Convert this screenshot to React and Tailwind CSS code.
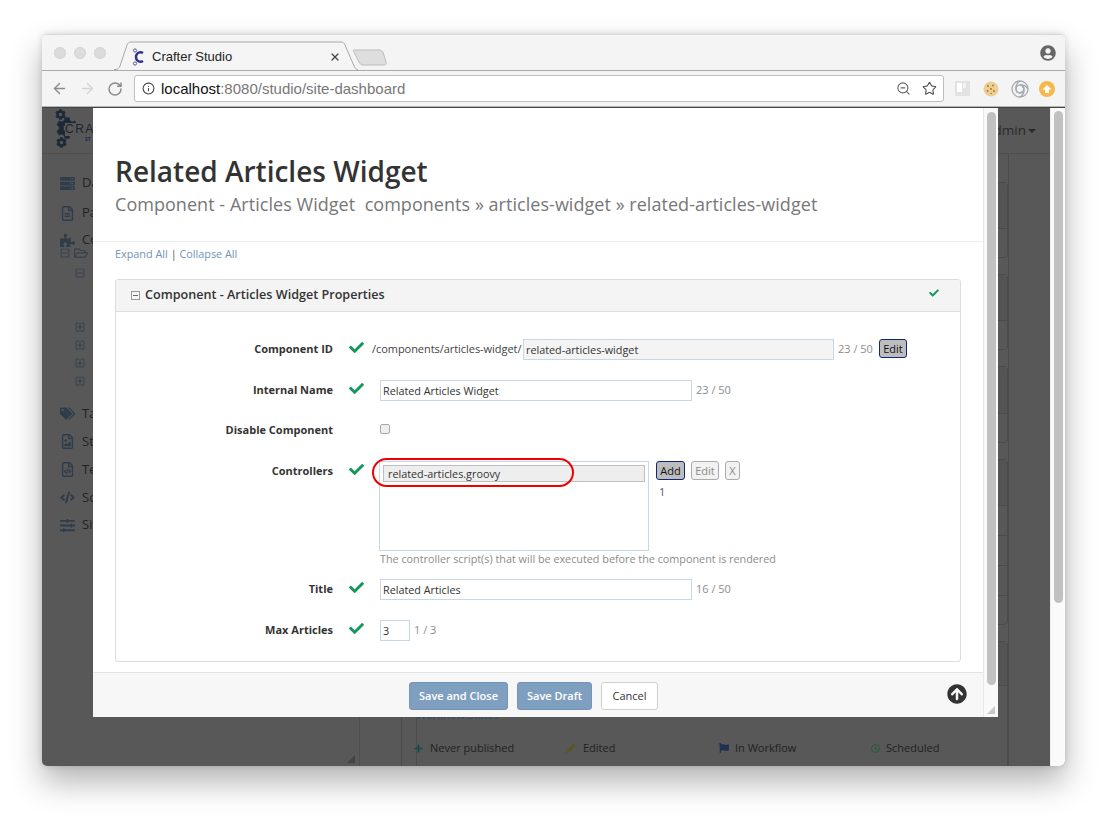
import {
  FaCheck, FaCog, FaServer, FaRegFileAlt, FaPuzzlePiece, FaTags, FaRegFileImage, FaRegFileCode, FaCode,
  FaSlidersH, FaRegMinusSquare, FaRegPlusSquare, FaRegFolderOpen, FaArrowCircleUp, FaPlus, FaPencilAlt, FaFlag, FaRegClock, FaUserCircle,
} from "react-icons/fa";
import { ArrowLeft, ArrowRight, RotateCw, Info, ZoomOut, Star, X } from "lucide-react";

function Favicon() {
  return (
    <svg width="14" height="18" viewBox="0 0 14 18" fill="none">
      <path d="M11 5 C8 3 4 5 4 9 C4 13 8 15 11 13" stroke="#33308a" strokeWidth="2.4" />
      <circle cx="3" cy="2.5" r="1.6" stroke="#5a5aa0" strokeWidth="1" />
      <circle cx="3" cy="15.5" r="1.6" stroke="#5a5aa0" strokeWidth="1" />
    </svg>
  );
}

function ChromeTabs() {
  return (
    <div className="relative h-[36px] bg-[#f4f4f4] border-b border-[#aaaaaa] rounded-t-[5px] flex items-center pl-[12px]">
      <span className="w-3 h-3 rounded-full bg-[#dcdcdc] border border-[#d2d2d2]" />
      <span className="w-3 h-3 rounded-full bg-[#dcdcdc] border border-[#d2d2d2] ml-2" />
      <span className="w-3 h-3 rounded-full bg-[#dcdcdc] border border-[#d2d2d2] ml-2" />
      <svg className="absolute left-[72px] top-[6px]" width="280" height="30" viewBox="0 0 280 30" fill="none">
        <path d="M0 28.5 H2 C4 28.5 5 27 6 25 L13 4 C14 2 15 1 17 1 H227 C229 1 230 2 231 4 L240 25 C241 27 242 28.5 244 28.5" fill="#f5f5f5" stroke="#a8a8a8" />
        <path d="M240 9 H265 C267 9 268 10 269 11 L272 21 C273 24 271 24 269 24 H249 C247 24 246 23 245 21 L240 11 C239 10 239 9 240 9 Z" fill="#dedede" stroke="#bcbcbc" />
      </svg>
      <div className="absolute left-[90px] top-[13px]"><Favicon /></div>
      <span className="absolute left-[110px] top-[14px] text-[13px] leading-[16px] text-[#222] font-['Liberation_Sans',sans-serif]">Crafter Studio</span>
      <X className="absolute left-[287px] top-[16px] text-[#444]" size={12} strokeWidth={2.5} />
      <FaUserCircle className="absolute right-[9px] top-[10px] text-[#666]" size={16} />
    </div>
  );
}

function ChromeToolbar() {
  return (
    <div className="h-[36px] bg-[#f4f4f4] border-b border-[#b5b5b5] flex items-center">
      <ArrowLeft className="ml-[9px] text-[#8a8a8a]" size={17} strokeWidth={2} />
      <ArrowRight className="ml-[11px] text-[#d4d4d4]" size={17} strokeWidth={2} />
      <RotateCw className="ml-[11px] text-[#8a8a8a]" size={16} strokeWidth={2.2} />
      <div className="ml-[11px] w-[810px] h-[27px] bg-white border border-[#bdbdbd] rounded-[3px] flex items-center pl-[7px] pr-[6px] font-['Liberation_Sans',sans-serif] text-[15px]">
        <Info className="text-[#444]" size={13} strokeWidth={2} />
        <span className="ml-[6px] pt-px text-[#111]">localhost</span>
        <span className="pt-px text-[#777]">:8080/studio/site-dashboard</span>
        <ZoomOut className="ml-auto text-[#666]" size={15} strokeWidth={1.8} />
        <Star className="ml-[11px] text-[#555]" size={15} strokeWidth={1.8} />
      </div>
      <div className="ml-[11px] w-[15px] h-[15px] rounded-[1px] bg-[#e2e2e2] flex p-[2px] gap-[1px]">
        <span className="w-[5px] h-[9px] bg-white" />
        <span className="w-[3px] h-[5px] bg-[#f3f3f3]" />
      </div>
      <svg className="ml-[13px]" width="16" height="16" viewBox="0 0 16 16">
        <circle cx="8" cy="8" r="7.5" fill="#eccf95" />
        <circle cx="5" cy="5" r="1" fill="#a9763c" />
        <circle cx="10" cy="4.5" r="0.9" fill="#a9763c" />
        <circle cx="8" cy="8" r="1" fill="#a9763c" />
        <circle cx="4.5" cy="10" r="0.9" fill="#a9763c" />
        <circle cx="11" cy="10" r="1" fill="#a9763c" />
        <circle cx="8" cy="12.5" r="0.8" fill="#a9763c" />
      </svg>
      <svg className="ml-[12px]" width="18" height="18" viewBox="0 0 18 18" fill="none" stroke="#a3aab0" strokeWidth="1.3">
        <circle cx="9" cy="9" r="8" />
        <path d="M9 1 C3 5 4 13 9 13 C13 13 14 8 11 6.5" />
        <path d="M17 9 C13 3 5 4 5 9 C5 13 10 14 11.5 11" />
        <path d="M9 17 C15 13 14 5 9 5" />
      </svg>
      <span className="ml-[10px] w-4 h-4 rounded-full bg-[#f5b94e] flex items-center justify-center">
        <svg width="10" height="10" viewBox="0 0 10 10"><path d="M5 1 L9.5 5.5 H7 V9 H3 V5.5 H0.5 Z" fill="white" /></svg>
      </span>
    </div>
  );
}

const navTop = [
  { icon: FaServer, label: "Dashboard", h: "h-[30px]" },
  { icon: FaRegFileAlt, label: "Pages", h: "h-[30px]" },
  { icon: FaPuzzlePiece, label: "Components", h: "h-[24px]" },
];
const navBottom = [
  { icon: FaTags, label: "Taxonomy" },
  { icon: FaRegFileImage, label: "Static Assets" },
  { icon: FaRegFileCode, label: "Templates" },
  { icon: FaCode, label: "Scripts" },
  { icon: FaSlidersH, label: "Site Config" },
];

function NavItem({ item }) {
  const Icon = item.icon;
  // the modal covers everything right of 51px, so the label is cut there
  return (
    <div className={"w-[51px] overflow-hidden flex items-center pl-[18px] " + (item.h || "h-[27.8px]")}>
      <Icon className="text-[#2f3d4b] shrink-0" size={15} />
      <span className="ml-[7px] text-[13px] text-[#222] whitespace-nowrap">{item.label}</span>
    </div>
  );
}

function Sidebar() {
  return (
    <div className="w-[318px] border-r border-[#4f4f4f] pt-[14px] relative">
      {navTop.map((item) => <NavItem key={item.label} item={item} />)}
      <div className="-mt-[6px] pl-[18px] h-[14px] flex items-center gap-[4px] text-[#34404c]">
        <FaRegMinusSquare size={10} /><FaRegFolderOpen size={14} />
      </div>
      <div className="pl-[33px] h-[58px] pt-[8px] text-[#34404c]"><FaRegMinusSquare size={10} /></div>
      {[0, 1, 2, 3].map((i) => (
        <div key={i} className="pl-[33px] h-[18px] flex items-center text-[#34404c]"><FaRegPlusSquare size={10} /></div>
      ))}
      <div className="pt-[10px]">
        {navBottom.map((item) => <NavItem key={item.label} item={item} />)}
      </div>
      <svg className="absolute right-[4px] bottom-[3px]" width="8" height="8" viewBox="0 0 8 8"><path d="M8 0 V8 H0 Z" fill="#444" /></svg>
    </div>
  );
}

function BackBox({ rows }) {
  return (
    <div className="ml-[14px] mb-[16px] rounded-r-[4px] border border-[#4b4b4b]">
      {rows.map((h, i) => (
        <div key={i} style={{ height: h }} className={i > 0 ? "border-t border-[#4b4b4b]" : "bg-[#545454]"} />
      ))}
    </div>
  );
}

function Backdrop() {
  return (
    <div className="h-[658px] bg-[#585858] flex flex-col overflow-hidden font-['Open_Sans',sans-serif]">
      <div className="h-[46px] shrink-0 border-b border-[#4f4f4f] relative flex items-center justify-end pr-[29px]">
        <div className="absolute left-[13px] top-[1px] w-[38px] h-[42px] overflow-hidden text-[#1d2a36]">
          <FaCog className="absolute left-0 top-0" size={11} />
          <FaCog className="absolute left-[1px] top-[8px]" size={22} />
          <FaCog className="absolute left-[1px] top-[28px]" size={11} />
          <span className="absolute left-[10px] top-[14px] text-[12px] leading-[13px] tracking-[1.5px] text-[#1a2530] bg-[#585858] font-['Liberation_Sans',sans-serif]">CRA</span>
          <span className="absolute left-[30px] top-[27px] text-[5px] leading-[6px] font-bold text-[#1e2a5a]">ST</span>
        </div>
        <span className="text-[13.5px] text-[#2a2a2a]">admin</span>
        <span className="ml-[2px] border-x-[4px] border-t-[4px] border-x-transparent border-t-[#2a2a2a]" />
      </div>
      <div className="flex flex-1 min-h-0 mr-[56px]">
        <Sidebar />
        <div className="ml-[41px] flex-1 border-x border-[#4b4b4b] pt-[28px] relative overflow-hidden">
          <BackBox rows={[45, 29]} />
          <BackBox rows={[45, 29]} />
          <BackBox rows={[46, 29]} />
          <BackBox rows={[45, 30, 30, 30, 29]} />
          <BackBox rows={[43, 100]} />
          <div className="absolute left-[14px] top-[553px] text-[11px] leading-[16px] text-[#2d4a6a]">Workflow States</div>
          <div className="absolute left-[12px] top-[586px] flex items-center text-[11px] text-[#222]">
            <div className="w-[152px] flex items-center gap-[7px]"><FaPlus className="text-[#0e4c4c]" size={9} />Never published</div>
            <div className="w-[153px] flex items-center gap-[8px]"><FaPencilAlt className="text-[#5d521a]" size={9} />Edited</div>
            <div className="w-[152px] flex items-center gap-[6px]"><FaFlag className="text-[#1f3350]" size={10} />In Workflow</div>
            <div className="flex items-center gap-[6px]"><FaRegClock className="text-[#1f5a30]" size={9} />Scheduled</div>
          </div>
        </div>
      </div>
    </div>
  );
}

function Check({ size = 15 }) {
  return <FaCheck className="text-[#13985a]" size={size} />;
}

function Row({ label, ok = true, className = "", children }) {
  return (
    <div className={"flex " + className}>
      <div className="w-[217px] text-right font-bold text-[11px] leading-[20px] text-[#333] shrink-0">{label}</div>
      <div className="ml-[16px] w-[23px] shrink-0 pt-[1px]">{ok && <Check />}</div>
      <div className="flex items-start min-w-0">{children}</div>
    </div>
  );
}

function TextBox({ value, className = "" }) {
  return (
    <div className={"h-[21px] border border-[#c6d8e5] px-[2px] text-[10.8px] leading-[19px] text-[#333] " + className}>{value}</div>
  );
}

function Count({ children, className = "" }) {
  return <span className={"text-[11px] leading-[20px] text-[#8c8c8c] " + className}>{children}</span>;
}

function SmallButton({ children, active, className = "" }) {
  const look = active
    ? "bg-[#bdbdbd] border-[#10287c] text-[#111]"
    : "bg-[#f2f2f2] border-[#ababab] text-[#8a8a8a]";
  return (
    <button className={"h-[19px] border rounded-[3px] text-[11px] leading-[17px] text-center " + look + " " + className}>{children}</button>
  );
}

function Panel() {
  return (
    <div className="mt-[17px] mx-[22px] h-[383px] border border-[#dcdcdc] rounded-[3px]">
      <div className="h-[32px] bg-[#f4f4f4] border-b border-[#dedede] flex items-center pl-[15px] pr-[21px] rounded-t-[3px]">
        <span className="w-[9px] h-[9px] border border-[#999] bg-[#f8f8f8] flex items-center justify-center">
          <span className="w-[5px] h-px bg-[#666]" />
        </span>
        <span className="ml-[5px] text-[12.6px] font-semibold text-[#333]">Component - Articles Widget Properties</span>
        <span className="ml-auto -mt-[6px]"><Check size={10} /></span>
      </div>
      <div className="pt-[27px]">
        <Row label="Component ID" className="h-[21px]">
          <span className="w-[148px] text-[11px] leading-[20px] text-[#444] whitespace-nowrap tracking-[-0.05px]">/components/articles-widget/</span>
          <TextBox value="related-articles-widget" className="ml-[3px] w-[311px] bg-[#f4f4f4]" />
          <Count className="ml-[4px] w-[41px] whitespace-nowrap">23 / 50</Count>
          <SmallButton active className="w-[28px]">Edit</SmallButton>
        </Row>
        <Row label="Internal Name" className="mt-[20px] h-[21px]">
          <TextBox value="Related Articles Widget" className="ml-[8px] w-[312px]" />
          <Count className="ml-[4px]">23 / 50</Count>
        </Row>
        <Row label="Disable Component" ok={false} className="mt-[19px] h-[21px]">
          <span className="ml-[8px] mt-[4px] w-[10px] h-[10px] rounded-[2px] border border-[#a9a9a9] bg-[#eeeeee]" />
        </Row>
        <Row label="Controllers" className="mt-[20px]">
          <div className="ml-[7px] w-[270px]">
            <div className="h-[90px] border border-[#c6d8e5] p-[3px]">
              <div className="h-[17px] border border-[#bfbfbf] bg-[#eeeeee] pl-[4px] text-[10.8px] leading-[15px] text-[#333]">related-articles.groovy</div>
            </div>
            <div className="text-[10.8px] leading-[16px] text-[#8c8c8c] whitespace-nowrap pl-px">The controller script(s) that will be executed before the component is rendered</div>
          </div>
          <div className="ml-[7px]">
            <div className="flex gap-[6px]">
              <SmallButton active className="w-[29px]">Add</SmallButton>
              <SmallButton className="w-[28px]">Edit</SmallButton>
              <SmallButton className="w-[15px]">X</SmallButton>
            </div>
            <div className="mt-[4px] pl-[3px] text-[11px] leading-[16px] text-[#555]">1</div>
          </div>
        </Row>
        <Row label="Title" className="mt-[12px] h-[21px]">
          <TextBox value="Related Articles" className="ml-[8px] w-[312px]" />
          <Count className="ml-[4px]">16 / 50</Count>
        </Row>
        <Row label="Max Articles" className="mt-[20px] h-[21px]">
          <TextBox value="3" className="ml-[8px] w-[30px]" />
          <Count className="ml-[4px]">1 / 3</Count>
        </Row>
      </div>
      {/* red highlight drawn over the controllers list */}
      <div className="absolute left-[279px] top-[350px] w-[202px] h-[29px] rounded-full border-2 border-[#ee0000]" />
    </div>
  );
}

function Modal() {
  return (
    <div className="absolute left-[51px] top-0 w-[905px] h-[609px] bg-white flex font-['Open_Sans',sans-serif]">
      <div className="w-[890px] flex flex-col relative">
        <div className="flex-1 min-h-0">
          <div className="px-[22px] pt-[47px] pb-[25px] border-b border-[#ededed]">
            <h1 className="text-[28px] leading-[32px] font-semibold text-[#333]">Related Articles Widget</h1>
            <p className="mt-[5px] text-[18px] leading-[24px] text-[#777] tracking-[0.04px] whitespace-pre">Component - Articles Widget  components » articles-widget » related-articles-widget</p>
          </div>
          <div className="pt-[4px] pl-[22px] text-[10.85px] leading-[16px] text-[#6f93b9]">
            Expand All <span className="text-[#555]">|</span> Collapse All
          </div>
          <Panel />
        </div>
        <div className="h-[45px] bg-[#f7f7f7] border-t border-[#e4e4e4] relative flex items-center justify-center pr-[9px] pt-[2px] gap-[9px] text-[11px]">
          <button className="w-[99px] h-[28px] rounded-[3px] bg-[#7f9fc0] border border-[#7596b8] text-white font-semibold">Save and Close</button>
          <button className="w-[75px] h-[28px] rounded-[3px] bg-[#7f9fc0] border border-[#7596b8] text-white font-semibold">Save Draft</button>
          <button className="w-[57px] h-[28px] rounded-[3px] bg-white border border-[#d0d0d0] text-[#333]">Cancel</button>
          <FaArrowCircleUp className="absolute left-[854px] top-[11px] text-[#333]" size={20} />
        </div>
      </div>
      <div className="w-[15px] bg-[#f9f9f9] border-l border-[#e8e8e8] relative">
        <div className="absolute left-[3px] top-[4px] w-[9px] h-[573px] rounded-full bg-[#c1c1c1]" />
        <svg className="absolute right-[3px] bottom-[3px]" width="8" height="8" viewBox="0 0 8 8"><path d="M8 0 V8 H0 Z" fill="#c8c8c8" /></svg>
      </div>
    </div>
  );
}

export default function App() {
  return (
    <div className="w-[1107px] h-[816px] bg-white pt-[34px] pl-[42px] overflow-hidden">
      <div className="w-[1023px] h-[732px] rounded-[5px] shadow-[0_16px_32px_rgba(0,0,0,0.3),0_0_6px_rgba(0,0,0,0.15)] overflow-hidden flex flex-col border-t border-[#d8d8d8]">
        <ChromeTabs />
        <ChromeToolbar />
        <div className="relative h-[659px] border-t border-[#444]">
          <Backdrop />
          <Modal />
          <div className="absolute right-0 top-0 h-full w-[15px] bg-[#fafafa] border-l border-[#eeeeee]">
            <div className="absolute left-[3px] top-[3px] w-[9px] h-[492px] rounded-full bg-[#c1c1c1]" />
          </div>
        </div>
      </div>
    </div>
  );
}
